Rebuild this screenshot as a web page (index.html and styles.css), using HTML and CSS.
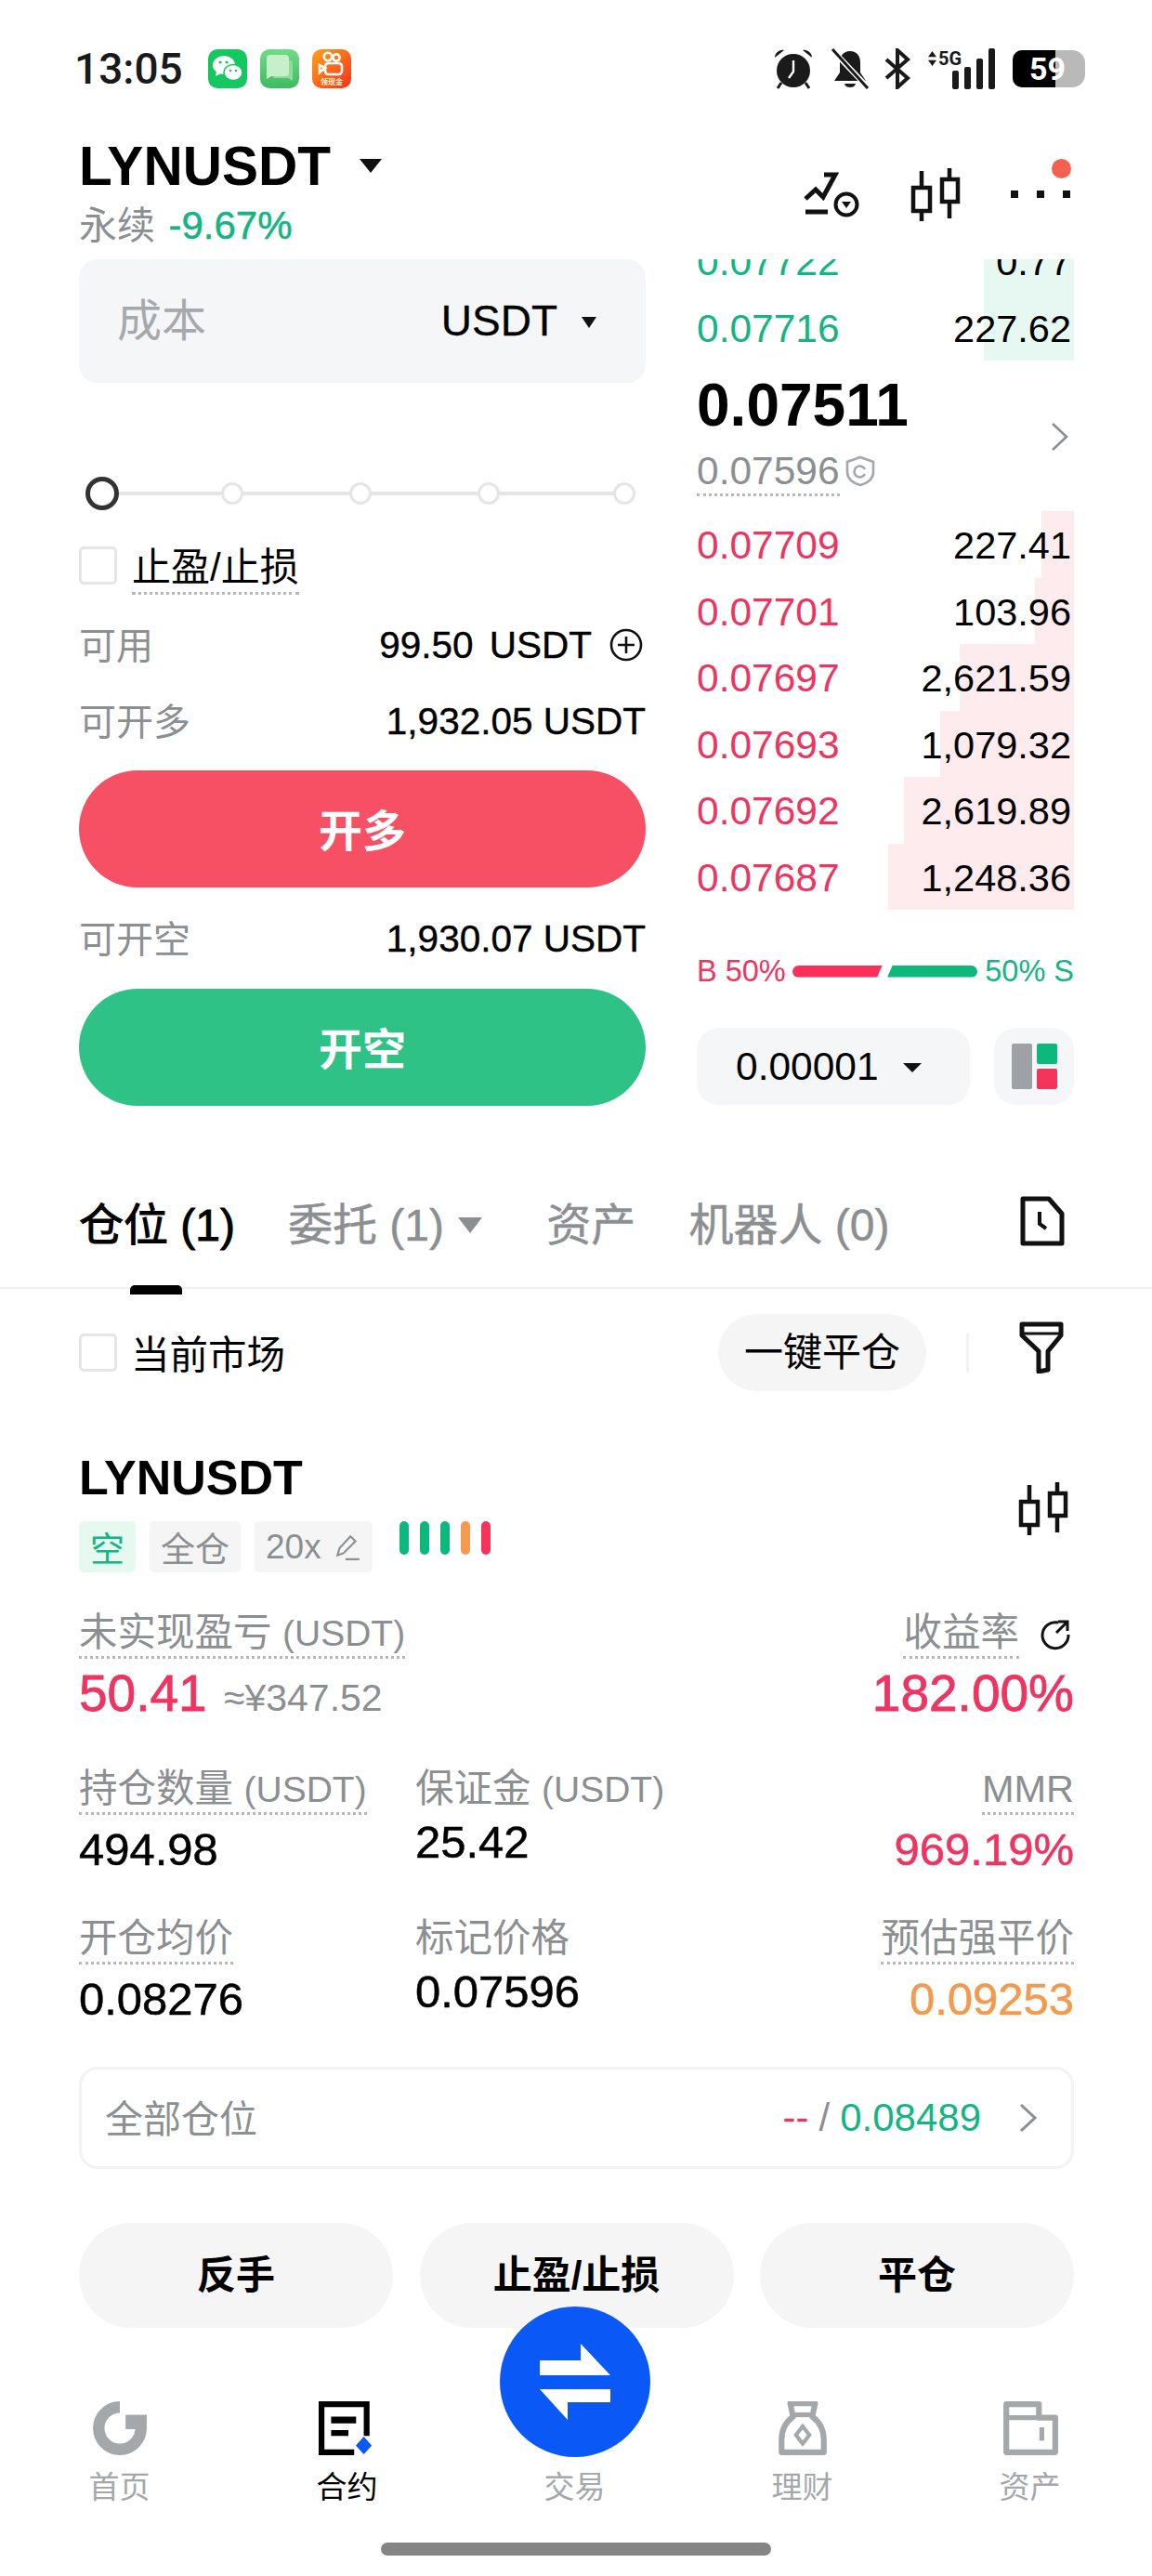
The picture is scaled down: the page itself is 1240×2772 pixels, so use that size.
FILE: index.html
```html
<!DOCTYPE html>
<html lang="zh-CN">

<head>
    <meta charset="UTF-8">
    <meta name="viewport" content="width=device-width, initial-scale=1.0">
    <title>LYNUSDT 永续</title>
    <link rel="stylesheet" href="styles.css">
</head>
<body>
    <div class="content">
        <div class="status">
            <span class="time">13:05</span>
            <div class="app-icons">
                <svg class="app" viewBox="0 0 42 42"><rect width="42" height="42" rx="10" fill="#14c75f"/><ellipse cx="17" cy="17" rx="12" ry="10" fill="#fff"/><path d="M9 23l-1 6 6-3z" fill="#fff"/><ellipse cx="27" cy="25" rx="10" ry="8.5" fill="#fff" stroke="#14c75f" stroke-width="1.5"/><circle cx="13" cy="14" r="1.6" fill="#14c75f"/><circle cx="20" cy="14" r="1.6" fill="#14c75f"/><circle cx="24" cy="23" r="1.3" fill="#14c75f"/><circle cx="30" cy="23" r="1.3" fill="#14c75f"/></svg>
                <svg class="app" viewBox="0 0 42 42"><defs><linearGradient id="msg" x1="0" y1="0" x2="0" y2="1"><stop offset="0" stop-color="#6fdc85"/><stop offset="1" stop-color="#3fbb62"/></linearGradient></defs><rect width="42" height="42" rx="10" fill="url(#msg)"/><path d="M26 12h6a3 3 0 0 1 3 3v19l-5-3H15l-3-3h14z" fill="#8fdc9b"/><rect x="7" y="6" width="24" height="23" rx="4" fill="#c8efcb"/><path d="M7 24v8l7-4z" fill="#c8efcb"/></svg>
                <svg class="app" viewBox="0 0 42 42"><defs><linearGradient id="ks" x1="0" y1="0" x2="1" y2="1"><stop offset="0" stop-color="#ffa31a"/><stop offset="1" stop-color="#f5301e"/></linearGradient></defs><rect width="42" height="42" rx="10" fill="url(#ks)"/><g fill="none" stroke="#fff" stroke-width="2.6"><circle cx="17" cy="8" r="4.2"/><circle cx="26" cy="9" r="3.6"/><rect x="14" y="15" width="18" height="12" rx="3.5"/><path d="M14 20l-6-3v8z"/></g><text class="app-tag" x="21" y="38" text-anchor="middle">领现金</text></svg>
            </div>
            <div class="sys-icons">
                <svg class="sys-alarm" viewBox="0 0 44 44"><path d="M2 10c0-5 5-9 10-8zM42 10c0-5-5-9-10-8z" fill="#1a1a1a"/><circle cx="22" cy="24" r="18" fill="#1a1a1a"/><path d="M22 13v12l-5 7" fill="none" stroke="#fff" stroke-width="2.4"/><path d="M9 37l-4 6M35 37l4 6" stroke="#1a1a1a" stroke-width="3"/></svg>
                <svg class="sys-bell" viewBox="0 0 42 44"><path d="M21 3c-7 0-11 5-11 12v11l-6 9h34l-6-9V15c0-7-4-12-11-12z" fill="#1a1a1a"/><path d="M15 38h12c-1 3-3 4-6 4s-5-1-6-4z" fill="#1a1a1a"/><path d="M1 1l40 42" stroke="#fff" stroke-width="6"/><path d="M2 1l38 42" stroke="#1a1a1a" stroke-width="3"/></svg>
                <svg class="sys-bt" viewBox="0 0 30 44"><path d="M3 12l23 20-11 10V2l11 10L3 32" fill="none" stroke="#1a1a1a" stroke-width="4"/></svg>
                <div class="sys-net">
                    <span class="net-label">5G</span>
                    <svg class="net-arrows" viewBox="0 0 12 20"><path d="M6 1l5 7H1zM6 19l5-7H1z" fill="#1a1a1a"/></svg>
                    <svg class="net-bars" viewBox="0 0 46 44"><rect x="0" y="24" width="7" height="20" rx="2" fill="#1a1a1a"/><rect x="13" y="20" width="7" height="24" rx="2" fill="#1a1a1a"/><rect x="26" y="11" width="7" height="33" rx="2" fill="#1a1a1a"/><rect x="39" y="0" width="7" height="44" rx="2" fill="#1a1a1a"/></svg>
                </div>
                <div class="battery"><span class="battery-level"></span><span class="battery-num">59</span></div>
            </div>
        </div>

        <div class="header">
            <div>
                <div class="symbol">LYNUSDT <span class="caret caret-big"></span></div>
                <div class="sub"><span class="muted">永续</span> <span class="green sub-pct">-9.67%</span></div>
            </div>
            <div class="header-icons">
                <svg class="ic-signal" viewBox="0 0 60 50"><path d="M2 29l11-10 8 8L34 3H22M2 43h24" fill="none" stroke="#111" stroke-width="5"/><circle cx="46" cy="35" r="11.5" fill="#fff" stroke="#111" stroke-width="4"/><path d="M41 32h10l-5 7z" fill="#111"/></svg>
                <svg class="ic-candle" viewBox="0 0 54 58"><g fill="none" stroke="#111" stroke-width="4.5"><rect x="3" y="22" width="18" height="25"/><path d="M12 4v18M12 47v11"/><rect x="34" y="13" width="17" height="24"/><path d="M42 1v12M42 37v18"/></g></svg>
                <div class="more">
                    <span class="more-dot"></span><span class="more-dot"></span><span class="more-dot"></span>
                    <span class="badge"></span>
                </div>
            </div>
        </div>

        <div class="trade">
            <div class="form">
                <div class="cost">
                    <span class="cost-label">成本</span>
                    <span class="cost-unit">USDT <span class="caret caret-small"></span></span>
                </div>
                <div class="slider">
                    <span class="node node-on"></span>
                    <span class="node"></span>
                    <span class="node"></span>
                    <span class="node"></span>
                    <span class="node"></span>
                </div>
                <div class="tp-row">
                    <span class="check"></span>
                    <span class="tp-label">止盈/止损</span>
                </div>
                <div class="info-row info-first">
                    <span class="muted">可用</span>
                    <span class="info-val">
                        <span class="info-wide">99.50 USDT</span>
                        <svg class="ic-plus" viewBox="0 0 36 36"><circle cx="18" cy="18" r="16" fill="none" stroke="#111" stroke-width="2.6"/><path d="M18 9v18M9 18h18" stroke="#111" stroke-width="2.6"/></svg>
                    </span>
                </div>
                <div class="info-row info-second">
                    <span class="muted">可开多</span>
                    <span class="info-val">1,932.05 USDT</span>
                </div>
                <div class="action action-long">开多</div>
                <div class="info-row info-third">
                    <span class="muted">可开空</span>
                    <span class="info-val">1,930.07 USDT</span>
                </div>
                <div class="action action-short">开空</div>
            </div>

            <div class="book">
                <div class="asks">
                    <div class="book-row"><span class="depth depth-green" style="width:97px"></span><span class="green">0.07722</span><span class="qty">0.77</span></div>
                    <div class="book-row"><span class="depth depth-green" style="width:97px"></span><span class="green">0.07716</span><span class="qty">227.62</span></div>
                </div>
                <div class="mid">
                    <div class="last-price">0.07511</div>
                    <div class="mark-row">
                        <span class="mark-price">0.07596</span>
                        <svg class="ic-shield" viewBox="0 0 32 34"><path d="M16 2l14 5v11c0 8-7 12-14 14C9 30 2 26 2 18V7z" fill="none" stroke="#a5a8ab" stroke-width="2.6"/><path d="M21 15a6 6 0 1 0 0 5" fill="none" stroke="#a5a8ab" stroke-width="2.6"/></svg>
                    </div>
                    <svg class="ic-chev mid-chev" viewBox="0 0 20 32"><path d="M2 2l15 14L2 30" fill="none" stroke="#8c8f92" stroke-width="2.6"/></svg>
                </div>
                <div class="bids">
                    <div class="book-row"><span class="depth" style="width:35px"></span><span class="red">0.07709</span><span class="qty">227.41</span></div>
                    <div class="book-row"><span class="depth" style="width:42px"></span><span class="red">0.07701</span><span class="qty">103.96</span></div>
                    <div class="book-row"><span class="depth" style="width:123px"></span><span class="red">0.07697</span><span class="qty">2,621.59</span></div>
                    <div class="book-row"><span class="depth" style="width:144px"></span><span class="red">0.07693</span><span class="qty">1,079.32</span></div>
                    <div class="book-row"><span class="depth" style="width:183px"></span><span class="red">0.07692</span><span class="qty">2,619.89</span></div>
                    <div class="book-row"><span class="depth" style="width:200px"></span><span class="red">0.07687</span><span class="qty">1,248.36</span></div>
                </div>
                <div class="ratio">
                    <span class="red">B 50%</span>
                    <span class="ratio-bar ratio-buy"></span>
                    <span class="ratio-bar ratio-sell"></span>
                    <span class="green">50% S</span>
                </div>
                <div class="book-tools">
                    <div class="precision">0.00001 <span class="caret caret-small caret-wide"></span></div>
                    <div class="layout-btn">
                        <span class="lay lay-gray"></span>
                        <div class="lay-col"><span class="lay lay-green"></span><span class="lay lay-red"></span></div>
                    </div>
                </div>
            </div>
        </div>

        <div class="tabs">
            <span class="tab tab-on">仓位 (1)<span class="tab-line"></span></span>
            <span class="tab">委托 (1) <span class="caret caret-tab"></span></span>
            <span class="tab">资产</span>
            <span class="tab">机器人 (0)</span>
            <svg class="ic-history" viewBox="0 0 48 54"><path d="M3 3h28l14 16v32H3z" fill="none" stroke="#111" stroke-width="5" stroke-linejoin="round"/><path d="M21 17v13l7 5" fill="none" stroke="#111" stroke-width="4"/></svg>
        </div>
    </div>
    <div class="tabs-rule"></div>

    <div class="content">
        <div class="tools">
            <span class="check"></span>
            <span class="tools-label">当前市场</span>
            <span class="close-all">一键平仓</span>
            <span class="tools-sep"></span>
            <svg class="ic-filter" viewBox="0 0 48 56"><path d="M3 3h42v12L31 32v20l-10 2V32L3 15z" fill="none" stroke="#111" stroke-width="5" stroke-linejoin="round"/><path d="M3 13h42" stroke="#111" stroke-width="3"/></svg>
        </div>

        <div class="pos-head">
            <div>
                <div class="pos-symbol">LYNUSDT</div>
                <div class="tags">
                    <span class="tag tag-short">空</span>
                    <span class="tag">全仓</span>
                    <span class="tag">20x
                        <svg class="ic-pen" viewBox="0 0 28 28"><path d="M4 22l2-7L17 3l5 5L10 20zM12 26h14" fill="none" stroke="#8c8f92" stroke-width="2"/></svg>
                    </span>
                    <div class="risk">
                        <span class="risk-bar risk-g"></span><span class="risk-bar risk-g"></span><span class="risk-bar risk-g"></span><span class="risk-bar risk-o"></span><span class="risk-bar risk-r"></span>
                    </div>
                </div>
            </div>
            <svg class="ic-candle pos-candle" viewBox="0 0 54 58"><g fill="none" stroke="#111" stroke-width="4.5"><rect x="3" y="22" width="18" height="25"/><path d="M12 4v18M12 47v11"/><rect x="34" y="13" width="17" height="24"/><path d="M42 1v12M42 37v18"/></g></svg>
        </div>

        <div class="stats stats-top">
            <div class="stat">
                <span class="stat-label dotted">未实现盈亏 <span class="unit">(USDT)</span></span>
                <div class="stat-big"><span class="red">50.41</span> <span class="approx">≈¥347.52</span></div>
            </div>
            <div></div>
            <div class="stat stat-right">
                <div class="label-line">
                    <span class="stat-label dotted">收益率</span>
                    <svg class="ic-refresh" viewBox="0 0 34 34"><path d="M20 4A14 14 0 1 0 31 17" fill="none" stroke="#111" stroke-width="3"/><path d="M18 15L29 4M20 3h10v10" fill="none" stroke="#111" stroke-width="3"/></svg>
                </div>
                <div class="stat-big red">182.00%</div>
            </div>
        </div>
        <div class="stats stats-mid">
            <div class="stat">
                <span class="stat-label dotted">持仓数量 <span class="unit">(USDT)</span></span>
                <div class="stat-val">494.98</div>
            </div>
            <div class="stat">
                <span class="stat-label">保证金 <span class="unit">(USDT)</span></span>
                <div class="stat-val stat-val-up">25.42</div>
            </div>
            <div class="stat stat-right">
                <span class="stat-label dotted">MMR</span>
                <div class="stat-val red">969.19%</div>
            </div>
        </div>
        <div class="stats stats-low">
            <div class="stat">
                <span class="stat-label dotted">开仓均价</span>
                <div class="stat-val">0.08276</div>
            </div>
            <div class="stat">
                <span class="stat-label">标记价格</span>
                <div class="stat-val stat-val-up">0.07596</div>
            </div>
            <div class="stat stat-right">
                <span class="stat-label dotted">预估强平价</span>
                <div class="stat-val orange">0.09253</div>
            </div>
        </div>

        <div class="all-pos">
            <span class="muted all-label">全部仓位</span>
            <span class="all-val"><span class="red">--</span> <span class="muted">/</span> <span class="green">0.08489</span>
                <svg class="ic-chev all-chev" viewBox="0 0 20 32"><path d="M2 2l15 14L2 30" fill="none" stroke="#8c8f92" stroke-width="3"/></svg>
            </span>
        </div>

        <div class="pos-actions">
            <span class="pos-btn">反手</span>
            <span class="pos-btn">止盈/止损</span>
            <span class="pos-btn">平仓</span>
        </div>
    </div>

    <div class="nav">
        <div class="nav-item">
            <svg class="nav-icon" viewBox="0 0 60 56"><path d="M30 6A22 22 0 1 0 52 28" fill="none" stroke="#a5a8ab" stroke-width="12"/><rect x="36" y="14" width="22" height="15" fill="#a5a8ab"/></svg>
            <span>首页</span>
        </div>
        <div class="nav-item nav-on">
            <svg class="nav-icon" viewBox="0 0 60 56"><path d="M50 36V3H3v50h34" fill="none" stroke="#000" stroke-width="6"/><path d="M13 16h26v7H13zM13 30h18v6H13z" fill="#000"/><path d="M47 36l9 10-9 10-9-10z" fill="#0a58f5" stroke="#fff" stroke-width="1"/></svg>
            <span>合约</span>
        </div>
        <div class="nav-item">
            <span class="nav-icon"></span>
            <span>交易</span>
        </div>
        <div class="nav-item">
            <svg class="nav-icon" viewBox="0 0 60 56"><path d="M17 2h26l-3 14c8 6 12 15 12 24v13H8V40c0-9 4-18 12-24z" fill="none" stroke="#a5a8ab" stroke-width="6" stroke-linejoin="round"/><path d="M18 14h24" stroke="#a5a8ab" stroke-width="5"/><path d="M30 26l7 9-7 9-7-9z" fill="none" stroke="#a5a8ab" stroke-width="4"/></svg>
            <span>理财</span>
        </div>
        <div class="nav-item">
            <svg class="nav-icon" viewBox="0 0 60 56"><path d="M5 3h34v14h17v36H5z" fill="none" stroke="#a5a8ab" stroke-width="6" stroke-linejoin="round"/><path d="M5 17h34" stroke="#a5a8ab" stroke-width="5"/><path d="M42 27v14" stroke="#a5a8ab" stroke-width="5"/></svg>
            <span>资产</span>
        </div>
        <div class="fab">
            <svg class="fab-icon" viewBox="0 0 76 82"><path d="M0 18h44V0l32 34H0zM0 49h76v14H30v19z" fill="#fff"/></svg>
        </div>
    </div>
    <div class="home-bar"></div>
</body>

</html>
```

FILE: styles.css
```css
body {
    margin: 0;
    width: 1240px;
    height: 2772px;
    overflow: hidden;
    background-color: #fff;
    color: #000;
    font-family: "Liberation Sans", "Noto Sans CJK SC", sans-serif;
}

.content {
    padding: 0 84px 0 85px;
}

.muted {
    color: #8c8f92;
}

.green {
    color: #12b583;
}

.red {
    color: #ee3460;
}

.orange {
    color: #f39a4e;
}

/* status bar */
.status {
    display: flex;
    align-items: center;
    height: 44px;
    padding-top: 52px;
    margin-left: -5px;
    margin-right: -12px;
}

.time {
    width: 144px;
    font-family: Roboto, sans-serif;
    font-weight: 500;
    font-size: 46px;
    color: #1a1a1a;
}

.app-icons {
    display: flex;
    gap: 14px;
}

.app {
    width: 42px;
    height: 42px;
}

.app-tag {
    font-size: 8px;
    font-weight: 700;
    fill: #fff3d0;
}

.sys-icons {
    display: flex;
    align-items: center;
    margin-left: auto;
}

.sys-alarm {
    width: 44px;
    height: 44px;
}

.sys-bell {
    width: 42px;
    height: 44px;
    margin-left: 18px;
}

.sys-bt {
    width: 30px;
    height: 44px;
    margin-left: 15px;
}

.sys-net {
    position: relative;
    width: 73px;
    height: 44px;
    margin-left: 17px;
}

.net-label {
    position: absolute;
    top: 0;
    left: 12px;
    font-family: Roboto, sans-serif;
    font-weight: 700;
    font-size: 20px;
    line-height: 22px;
    color: #1a1a1a;
}

.net-arrows {
    position: absolute;
    top: 2px;
    left: 0;
    width: 11px;
    height: 18px;
}

.net-bars {
    position: absolute;
    top: 0;
    right: 0;
    width: 46px;
    height: 44px;
}

.battery {
    position: relative;
    width: 78px;
    height: 40px;
    margin-left: 19px;
    border-radius: 10px 14px 14px 10px;
    background-color: #b9b9b9;
    overflow: hidden;
}

.battery-level {
    display: block;
    width: 46px;
    height: 40px;
    background-color: #000;
}

.battery-num {
    position: absolute;
    top: 0;
    left: 18px;
    font-family: Roboto, sans-serif;
    font-weight: 700;
    font-size: 34px;
    line-height: 40px;
    color: #fff;
}

/* carets */
.caret {
    display: inline-block;
    width: 0;
    height: 0;
    border-style: solid;
    border-color: #111 transparent transparent transparent;
}

.caret-big {
    border-width: 15px 12px 0 12px;
    margin-left: 15px;
    vertical-align: 13px;
}

.caret-small {
    border-width: 12px 8px 0 8px;
    margin-left: 14px;
    vertical-align: 8px;
}

.caret-wide {
    border-width: 10px 10px 0 10px;
    margin-left: 15px;
}

.caret-tab {
    border-width: 17px 13px 0 13px;
    border-top-color: #8c8f92;
    margin-left: 2px;
    margin-right: 12px;
    vertical-align: 8px;
}

/* header */
.header {
    display: flex;
    justify-content: space-between;
    margin-top: 53px;
    height: 119px;
}

.symbol {
    font-size: 58.5px;
    line-height: 60px;
    font-weight: 700;
}

.sub {
    margin-top: 9px;
    font-size: 41px;
    line-height: 50px;
}

.sub-pct {
    margin-left: 3px;
    font-size: 42px;
    -webkit-text-stroke: 0.5px #12b583;
}

.header-icons {
    display: flex;
    align-items: flex-start;
    padding-top: 31px;
    padding-right: 4px;
}

.ic-signal {
    width: 60px;
    height: 50px;
    margin-top: 5px;
}

.ic-candle {
    width: 54px;
    height: 58px;
}

.header-icons .ic-candle {
    margin-left: 55px;
}

.more {
    position: relative;
    display: flex;
    gap: 20px;
    margin-left: 54px;
    margin-top: 25px;
}

.more-dot {
    width: 8px;
    height: 8px;
    background-color: #111;
}

.badge {
    position: absolute;
    right: -1px;
    top: -34px;
    width: 21px;
    height: 21px;
    border-radius: 50%;
    background-color: #f7604f;
}

/* trade area */
.trade {
    display: flex;
    justify-content: space-between;
    margin-top: 11px;
    height: 910px;
}

.form {
    width: 610px;
}

.cost {
    display: flex;
    align-items: center;
    justify-content: space-between;
    height: 133px;
    padding: 0 53px 0 41px;
    border-radius: 20px;
    background-color: #f4f6f7;
}

.cost-label {
    margin-bottom: 10px;
    font-size: 48px;
    color: #a6a9ac;
}

.cost-unit {
    margin-bottom: 2px;
    font-size: 46px;
    -webkit-text-stroke: 0.3px #000;
}

.slider {
    display: flex;
    align-items: center;
    gap: 114px;
    height: 40px;
    margin-top: 99px;
    padding-left: 7px;
    background: linear-gradient(#e4e5e6, #e4e5e6) no-repeat 20px 18px / 570px 4px;
}

.node {
    width: 18px;
    height: 18px;
    border: 3px solid #e4e5e6;
    border-radius: 50%;
    background-color: #fff;
}

.node-on {
    width: 26px;
    height: 26px;
    border: 5px solid #333;
}

.node:nth-child(2) {
    margin-left: -4px;
}

.node:last-child {
    margin-left: 8px;
}

.tp-row {
    display: flex;
    align-items: center;
    height: 41px;
    margin-top: 37px;
}

.check {
    width: 35px;
    height: 35px;
    border: 3px solid #e5e6e7;
    border-radius: 5px;
    flex-shrink: 0;
}

.tp-label {
    margin-left: 16px;
    font-size: 42px;
    line-height: 52px;
    border-bottom: 3px dotted #b5b7b9;
    margin-top: 8px;
}

.info-row {
    display: flex;
    align-items: center;
    justify-content: space-between;
    height: 50px;
    font-size: 40px;
}

.info-row .muted {
    margin-bottom: 5px;
}

.info-first {
    margin-top: 40px;
}

.info-second {
    margin-top: 32px;
}

.info-third {
    margin-top: 30px;
}

.info-val {
    display: flex;
    align-items: center;
    font-size: 40.5px;
    -webkit-text-stroke: 0.4px #000;
}

.info-wide {
    word-spacing: 6px;
}

.ic-plus {
    width: 36px;
    height: 36px;
    margin-left: 19px;
    margin-right: 3px;
}

.action {
    display: flex;
    align-items: center;
    justify-content: center;
    box-sizing: border-box;
    height: 126px;
    padding-bottom: 4px;
    border-radius: 63px;
    color: #fff;
    font-size: 47px;
    font-weight: 700;
}

.action-long {
    margin-top: 28px;
    background-color: #f74f63;
}

.action-short {
    margin-top: 29px;
    background-color: #2ec287;
}

/* order book */
.book {
    width: 406px;
    margin-left: 55px;
}

.asks {
    display: flex;
    flex-direction: column;
    justify-content: flex-end;
    height: 109px;
    overflow: hidden;
}

.book-row {
    position: relative;
    display: flex;
    justify-content: space-between;
    flex-shrink: 0;
    height: 71.5px;
    line-height: 74px;
    font-size: 42.5px;
    padding-right: 3px;
}

.book-row span {
    position: relative;
}

.book-row .qty {
    font-size: 41.5px;
}

.book-row .depth {
    position: absolute;
    top: 0;
    right: 0;
    bottom: 0;
    background-color: #fdebee;
}

.book-row .depth-green {
    background-color: #e6f8f1;
}

.mid {
    position: relative;
    height: 162px;
}

.last-price {
    padding-top: 17px;
    font-size: 64px;
    line-height: 62px;
    font-weight: 700;
}

.mark-row {
    display: flex;
    align-items: center;
    margin-top: 16px;
}

.mark-price {
    font-size: 42.5px;
    line-height: 48px;
    color: #8c8f92;
    border-bottom: 3px dotted #b5b7b9;
}

.ic-shield {
    width: 32px;
    height: 34px;
    margin-left: 6px;
    margin-bottom: 3px;
}

.ic-chev {
    width: 20px;
    height: 32px;
}

.mid-chev {
    position: absolute;
    right: 5px;
    top: 66px;
}

.ratio {
    display: flex;
    align-items: center;
    justify-content: space-between;
    margin-top: 46px;
    height: 40px;
    font-size: 32.5px;
    white-space: nowrap;
}

.ratio-bar {
    flex-shrink: 0;
    height: 13px;
    width: 97px;
}

.ratio-buy {
    margin-left: 5px;
    background-color: #fb2f5a;
    border-radius: 7px 0 0 7px;
    clip-path: polygon(0 0, 100% 0, 94% 100%, 0 100%);
}

.ratio-sell {
    margin: 0 6px 0 3px;
    background-color: #0cb87b;
    border-radius: 0 7px 7px 0;
    clip-path: polygon(6% 0, 100% 0, 100% 100%, 0 100%);
}

.book-tools {
    display: flex;
    justify-content: space-between;
    margin-top: 41px;
}

.precision {
    width: 294px;
    height: 83px;
    box-sizing: border-box;
    padding-left: 42px;
    border-radius: 24px;
    background-color: #f4f6f7;
    font-size: 42.5px;
    line-height: 83px;
}

.layout-btn {
    display: flex;
    gap: 5px;
    justify-content: center;
    align-items: center;
    width: 86px;
    height: 83px;
    border-radius: 24px;
    background-color: #f4f6f7;
}

.lay {
    display: block;
    width: 22px;
    border-radius: 2px;
}

.lay-col {
    display: flex;
    flex-direction: column;
    gap: 5px;
}

.lay-gray {
    height: 49px;
    background-color: #9ea1a5;
}

.lay-green {
    height: 22px;
    background-color: #0cb87b;
}

.lay-red {
    height: 22px;
    background-color: #f5345c;
}

/* tabs */
.tabs {
    display: flex;
    align-items: center;
    gap: 57px;
    margin-top: 92px;
    height: 66px;
    padding-bottom: 38px;
    font-size: 48px;
    color: #8c8f92;
    -webkit-text-stroke: 0.5px #8c8f92;
}

.tab {
    position: relative;
    white-space: nowrap;
}

.tab-on {
    color: #000;
    -webkit-text-stroke: 1px #000;
}

.tab-line {
    position: absolute;
    left: 55px;
    bottom: -44px;
    width: 56px;
    height: 10px;
    border-radius: 5px 5px 0 0;
    background-color: #000;
}

.ic-history {
    width: 48px;
    height: 54px;
    margin-left: auto;
    margin-right: 10px;
}

.tabs-rule {
    height: 2px;
    background-color: #f0f0f1;
}

/* position */
.tools {
    display: flex;
    align-items: center;
    height: 83px;
    margin-top: 27px;
}

.tools-label {
    margin-left: 15px;
    margin-bottom: 2px;
    font-size: 41.5px;
}

.close-all {
    margin-left: auto;
    padding: 0 28px;
    border-radius: 42px;
    background-color: #f5f5f5;
    font-size: 42px;
    line-height: 83px;
}

.tools-sep {
    width: 3px;
    height: 42px;
    margin-left: 43px;
    background-color: #f2f2f2;
}

.ic-filter {
    width: 48px;
    height: 56px;
    margin-left: 54px;
    margin-right: 11px;
    margin-bottom: 12px;
}

.pos-head {
    display: flex;
    justify-content: space-between;
    align-items: flex-end;
    margin-top: 63px;
}

.pos-symbol {
    font-size: 52px;
    line-height: 60px;
    font-weight: 700;
}

.tags {
    display: flex;
    gap: 15px;
    margin-top: 17px;
    height: 55px;
}

.tag {
    display: flex;
    align-items: center;
    padding: 0 12px;
    border-radius: 5px;
    background-color: #f5f5f5;
    color: #8c8f92;
    font-size: 37px;
    white-space: nowrap;
}

.tag-short {
    background-color: #e5f9f1;
    color: #12b583;
    padding: 0 12px;
}

.ic-pen {
    width: 30px;
    height: 30px;
    margin-left: 13px;
}

.risk {
    display: flex;
    gap: 12px;
    margin-left: 14px;
}

.risk-bar {
    width: 10px;
    height: 36px;
    border-radius: 5px;
}

.risk-g {
    background-color: #0cb87b;
}

.risk-o {
    background-color: #f59a4e;
}

.risk-r {
    background-color: #f5345c;
}

.pos-candle {
    margin-right: 6px;
    margin-bottom: 40px;
}

.stats {
    display: grid;
    grid-template-columns: 362px 1fr auto;
    align-items: start;
}

.stats-top {
    margin-top: 40px;
}

.stats-mid {
    margin-top: 48px;
}

.stats-low {
    margin-top: 43px;
}

.stat {
    display: flex;
    flex-direction: column;
    align-items: flex-start;
}

.stat-right {
    align-items: flex-end;
}

.label-line {
    display: flex;
    align-items: center;
}

.stat-label {
    height: 50px;
    font-size: 41.5px;
    line-height: 50px;
    color: #8c8f92;
    white-space: nowrap;
}

.unit {
    font-size: 39px;
}

.dotted {
    border-bottom: 3px dotted #b5b7b9;
}

.ic-refresh {
    width: 34px;
    height: 34px;
    margin-left: 22px;
    margin-right: 3px;
}

.stat-big {
    margin-top: 7px;
    font-size: 55px;
    line-height: 60px;
    white-space: nowrap;
    -webkit-text-stroke: 0.8px;
}

.approx {
    margin-left: 3px;
    font-size: 41px;
    line-height: 1;
    color: #8c8f92;
    -webkit-text-stroke: 0;
}

.stat-val {
    margin-top: 9px;
    font-size: 49px;
    line-height: 56px;
    -webkit-text-stroke: 0.5px;
}

.stat-val-up {
    margin-top: 4px;
}

.all-pos {
    display: flex;
    align-items: center;
    justify-content: space-between;
    box-sizing: border-box;
    height: 110px;
    margin-top: 45px;
    padding: 0 36px 0 25px;
    border: 3px solid #f3f3f3;
    border-radius: 20px;
    font-size: 41px;
}

.all-label {
    margin-bottom: 4px;
}

.all-val {
    display: flex;
    align-items: center;
    gap: 11px;
    font-size: 42px;
    white-space: nowrap;
}

.all-chev {
    margin-left: 30px;
}

.pos-actions {
    display: flex;
    justify-content: space-between;
    margin-top: 58px;
}

.pos-btn {
    width: 338px;
    height: 113px;
    border-radius: 57px;
    background-color: #f5f5f5;
    text-align: center;
    font-size: 42px;
    font-weight: 700;
    line-height: 113px;
}

/* bottom nav */
.nav {
    position: relative;
    display: grid;
    grid-template-columns: repeat(5, 245px);
    margin-top: 79px;
    padding-left: 6px;
}

.nav-item {
    display: flex;
    flex-direction: column;
    align-items: center;
    font-size: 33px;
    line-height: 40px;
    color: #a5a8ab;
}

.nav-on {
    color: #000;
}

.nav-icon {
    display: block;
    width: 62px;
    height: 58px;
    margin-bottom: 15px;
}

.fab {
    position: absolute;
    top: -102px;
    left: 538px;
    display: flex;
    align-items: center;
    justify-content: center;
    width: 162px;
    height: 162px;
    border-radius: 50%;
    background-color: #0a58f5;
}

.fab-icon {
    width: 76px;
    height: 82px;
}

.home-bar {
    width: 420px;
    height: 14px;
    margin: 39px auto 0;
    border-radius: 7px;
    background-color: #848484;
}
```
